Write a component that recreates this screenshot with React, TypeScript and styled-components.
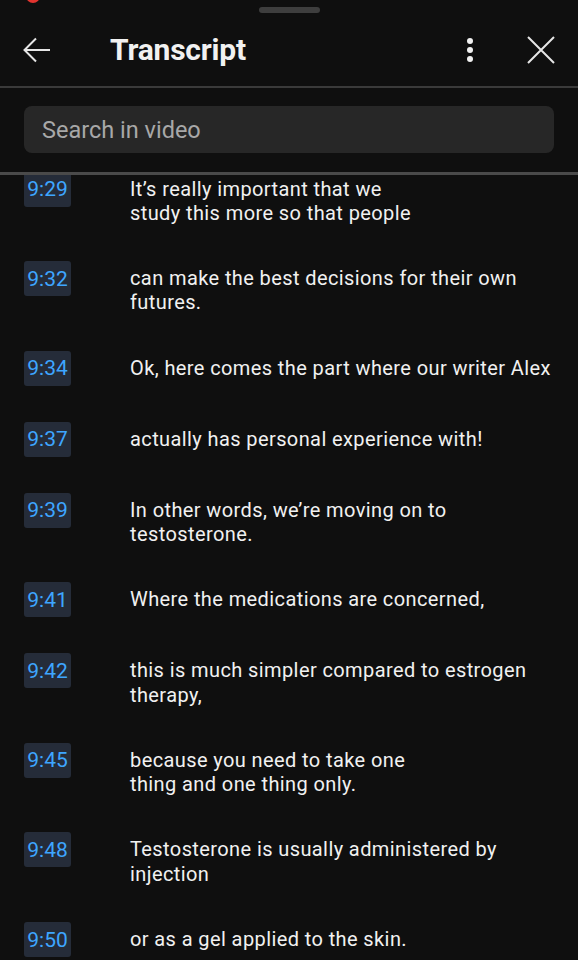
import styled, { createGlobalStyle } from 'styled-components'

const GlobalStyle = createGlobalStyle`
    html, body {
        margin: 0;
        padding: 0;
        background: #0f0f0f;
    }

    body {
        font-family: Roboto, 'Noto Sans', 'Liberation Sans', sans-serif;
        color: #f1f1f1;
    }
`

const Sheet = styled.div`
    position: relative;
    width: 578px;
    height: 960px;
    overflow: hidden;
    background: #0f0f0f;
    display: flex;
    flex-direction: column;
`

/* status bar notification dot peeking in from above */
const StatusDot = styled.div`
    position: absolute;
    left: 26px;
    top: -11px;
    width: 14px;
    height: 14px;
    border-radius: 50%;
    background: #e3342f;
`

const Handle = styled.div`
    width: 61px;
    height: 6px;
    margin: 7px auto 0;
    border-radius: 3px;
    background: #3e3e3e;
`

const Header = styled.div`
    height: 73px;
    display: flex;
    align-items: center;
    padding: 0 23px 0 22px;
`

const IconButton = styled.div<{ $width: number; $gap?: number }>`
    width: ${(p) => p.$width}px;
    height: 30px;
    margin-left: ${(p) => p.$gap ?? 0}px;
    display: flex;
    align-items: center;
    justify-content: center;
    flex-shrink: 0;
`

const Title = styled.h1`
    flex: 1;
    margin: 0 0 0 58px;
    font-size: 30px;
    font-weight: 700;
    letter-spacing: -0.2px;
    color: #f1f1f1;
`

const Divider = styled.div<{ $color: string; $height: number }>`
    height: ${(p) => p.$height}px;
    background: ${(p) => p.$color};
    flex-shrink: 0;
`

const SearchWrap = styled.div`
    padding: 18px 24px 19px;
`

const SearchBox = styled.div`
    height: 47px;
    border-radius: 8px;
    background: #272727;
    display: flex;
    align-items: center;
    padding: 0 18px;
    font-size: 23.5px;
    color: #a8a8a8;
`

const List = styled.div`
    flex: 1;
    overflow: hidden;
`

/* list is scrolled a little, first row sits partly under the divider */
const Scroller = styled.div`
    margin-top: -21.5px;
`

const Row = styled.div`
    display: grid;
    grid-template-columns: 106px 1fr;
    padding: 18px 20px 18px 24px;
`

const Stamp = styled.div`
    width: 47px;
    height: 35px;
    border-radius: 3px;
    background: #252c39;
    color: #3ea6ff;
    font-size: 21px;
    display: flex;
    align-items: center;
    justify-content: center;
`

const Caption = styled.div`
    margin-top: 5px;
    font-size: 20px;
    line-height: 24.3px;
    letter-spacing: 0.4px;
    color: #f1f1f1;
`

const Line = styled.div`
    white-space: nowrap;
`

const transcript = [
    { time: '9:29', lines: ['It’s really important that we', 'study this more so that people'] },
    { time: '9:32', lines: ['can make the best decisions for their own', 'futures.'] },
    { time: '9:34', lines: ['Ok, here comes the part where our writer Alex'] },
    { time: '9:37', lines: ['actually has personal experience with!'] },
    { time: '9:39', lines: ['In other words, we’re moving on to', 'testosterone.'] },
    { time: '9:41', lines: ['Where the medications are concerned,'] },
    { time: '9:42', lines: ['this is much simpler compared to estrogen', 'therapy,'] },
    { time: '9:45', lines: ['because you need to take one', 'thing and one thing only.'] },
    { time: '9:48', lines: ['Testosterone is usually administered by', 'injection'] },
    { time: '9:50', lines: ['or as a gel applied to the skin.'] },
]

function BackIcon() {
    return (
        <svg width='30' height='26' viewBox='0 0 30 26' fill='none'>
            <path
                d='M28 13H3M14 1.5L2.5 13L14 24.5'
                stroke='#e6e6e6'
                strokeWidth='2'
            />
        </svg>
    )
}

function MoreIcon() {
    return (
        <svg width='8' height='26' viewBox='0 0 8 26'>
            <circle cx='4' cy='4' r='3' fill='#f1f1f1' />
            <circle cx='4' cy='13' r='3' fill='#f1f1f1' />
            <circle cx='4' cy='22' r='3' fill='#f1f1f1' />
        </svg>
    )
}

function CloseIcon() {
    return (
        <svg width='28' height='28' viewBox='0 0 28 28' fill='none'>
            <path d='M1 1L27 27M27 1L1 27' stroke='#e6e6e6' strokeWidth='2' />
        </svg>
    )
}

function App() {
    return (
        <>
            <GlobalStyle />
            <Sheet>
                <StatusDot />
                <Handle />
                <Header>
                    <IconButton $width={30}>
                        <BackIcon />
                    </IconButton>
                    <Title>Transcript</Title>
                    <IconButton $width={8}>
                        <MoreIcon />
                    </IconButton>
                    <IconButton $width={28} $gap={53}>
                        <CloseIcon />
                    </IconButton>
                </Header>
                <Divider $color='#3a3a3a' $height={2} />
                <SearchWrap>
                    <SearchBox>Search in video</SearchBox>
                </SearchWrap>
                <Divider $color='#4a4a4a' $height={3} />
                <List>
                    <Scroller>
                        {transcript.map((item) => (
                            <Row key={item.time}>
                                <Stamp>{item.time}</Stamp>
                                <Caption>
                                    {item.lines.map((line) => (
                                        <Line key={line}>{line}</Line>
                                    ))}
                                </Caption>
                            </Row>
                        ))}
                    </Scroller>
                </List>
            </Sheet>
        </>
    )
}

export default App
